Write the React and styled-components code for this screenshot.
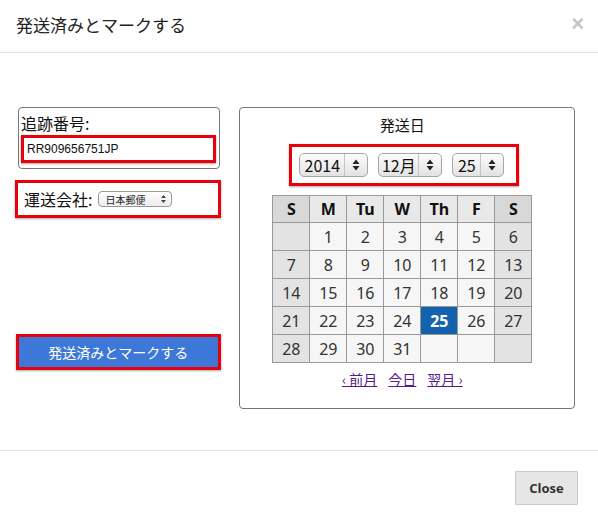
import React from 'react'
import styled, { createGlobalStyle } from 'styled-components'

const Global = createGlobalStyle`
  html, body { margin: 0; padding: 0; background: #fff; }
  body { font-family: "Noto Sans CJK JP", "Noto Sans", sans-serif; color: #222; }
`

const Modal = styled.div`
  width: 598px;
  height: 524px;
  display: flex;
  flex-direction: column;
  background: #fff;
`

const Header = styled.div`
  height: 53px;
  box-sizing: border-box;
  border-bottom: 1px solid #e5e5e5;
  display: flex;
  align-items: center;
  justify-content: space-between;
  padding: 0 14px 4px 16px;
`

const Title = styled.h4`
  margin: 0;
  font-size: 17px;
  font-weight: 400;
  color: #222;
`

const CloseX = styled.span`
  font-family: "Liberation Sans", Arial, sans-serif;
  font-size: 22px;
  font-weight: 700;
  color: #c4c4c4;
  line-height: 1;
`

const Body = styled.div`
  height: 397px;
  box-sizing: border-box;
  padding: 54px 23px 0 16px;
  display: flex;
  gap: 18px;
`

const LeftCol = styled.div`
  width: 205px;
  display: flex;
  flex-direction: column;
`

const TrackBox = styled.div`
  margin: 0 1px 0 2px;
  border: 1px solid #777;
  border-radius: 4px;
  padding: 3px 3px 5px 2px;
`

const Label = styled.span`
  font-size: 16px;
  line-height: 24px;
  color: #111;
`

const Highlight = styled.div`
  border: 3px solid #e8000b;
  box-shadow: 0 1px 2px rgba(0, 0, 0, 0.35);
`

const TrackInput = styled(Highlight)`
  height: 22px;
  display: flex;
  align-items: center;
  padding: 0 3px;
  font-family: "Liberation Sans", Arial, sans-serif;
  font-size: 12px;
  color: #111;
  background: #fff;
`

const CarrierRow = styled(Highlight)`
  margin-top: 11px;
  margin-left: -1px;
  height: 32px;
  display: flex;
  align-items: center;
  gap: 6px;
  padding: 0 6px;
`

const MiniSelect = styled.div`
  width: 74px;
  height: 16px;
  box-sizing: border-box;
  border: 1px solid #999;
  border-radius: 4px;
  background: linear-gradient(#fff, #ececec);
  display: flex;
  align-items: center;
  justify-content: space-between;
  padding: 0 5px 0 6px;
  font-size: 10px;
  color: #222;
`

const MarkButton = styled(Highlight)`
  margin-top: 116px;
  height: 30px;
  background: #3d78d8;
  color: #fff;
  font-size: 14px;
  display: flex;
  align-items: center;
  justify-content: center;
`

const CalPanel = styled.div`
  width: 337px;
  height: 302px;
  box-sizing: border-box;
  border: 1px solid #777;
  border-radius: 4px;
  display: flex;
  flex-direction: column;
  align-items: center;
  padding: 6px 9px 0 0;
`

const CalTitle = styled.div`
  font-size: 15px;
  line-height: 22px;
  color: #111;
`

const SelectGroup = styled(Highlight)`
  margin-top: 8px;
  margin-left: 4px;
  height: 36px;
  display: flex;
  align-items: center;
  gap: 10px;
  padding: 0 12px 0 7px;
`

const Select = styled.div`
  width: ${p => p.$w}px;
  height: 24px;
  box-sizing: border-box;
  border: 1px solid #a5a5a5;
  border-radius: 5px;
  background: linear-gradient(#fdfdfd, #e2e2e2);
  display: flex;
  align-items: center;
  box-shadow: inset 0 1px 0 #fff;
`

const SelectValue = styled.span`
  flex: 1;
  text-align: center;
  font-size: 16px;
  color: #111;
`

const SelectArrow = styled.span`
  width: 22px;
  height: 100%;
  border-left: 1px solid #c4c4c4;
  display: flex;
  align-items: center;
  justify-content: center;
`

const Table = styled.table`
  margin-top: 9px;
  border-collapse: collapse;
  border: 1px solid #999;
  font-family: "Noto Sans", "Noto Sans CJK JP", sans-serif;
`

const Th = styled.th`
  width: 36px;
  height: 26px;
  padding: 0;
  border: 1px solid #999;
  background: ${p => (p.$weekend ? '#d8d8d8' : '#e9e9e9')};
  font-size: 16px;
  font-weight: 700;
  color: #111;
`

const Td = styled.td`
  width: 36px;
  height: 27px;
  padding: 0;
  border: 1px solid #999;
  text-align: center;
  font-size: 16px;
  color: ${p => (p.$active ? '#fff' : '#333')};
  font-weight: ${p => (p.$active ? 700 : 400)};
  background: ${p => (p.$active ? '#1461ad' : p.$weekend ? '#e3e3e3' : '#f6f6f6')};
`

const Nav = styled.div`
  margin-top: 6px;
  display: flex;
  gap: 11px;
  font-size: 14px;
`

const NavLink = styled.a`
  color: #551a8b;
  text-decoration: underline;
`

const Footer = styled.div`
  flex: 1;
  border-top: 1px solid #e5e5e5;
  display: flex;
  justify-content: flex-end;
  align-items: flex-start;
  padding: 20px 20px 0 0;
`

const CloseButton = styled.button`
  width: 63px;
  height: 34px;
  background: #e6e6e6;
  border: 1px solid #c8c8c8;
  border-radius: 1px;
  font-family: "Open Sans", "Liberation Sans", sans-serif;
  font-size: 13px;
  font-weight: 700;
  color: #333;
`

const Arrows = () => (
  <svg width="8" height="12" viewBox="0 0 8 12">
    <path d="M4 0.5 L7.5 5 H0.5 Z M4 11.5 L7.5 7 H0.5 Z" fill="#222" />
  </svg>
)

const weeks = [
  [null, 1, 2, 3, 4, 5, 6],
  [7, 8, 9, 10, 11, 12, 13],
  [14, 15, 16, 17, 18, 19, 20],
  [21, 22, 23, 24, 25, 26, 27],
  [28, 29, 30, 31, null, null, null],
]

const days = ['S', 'M', 'Tu', 'W', 'Th', 'F', 'S']

export default function App() {
  return (
    <>
      <Global />
      <Modal>
        <Header>
          <Title>発送済みとマークする</Title>
          <CloseX>×</CloseX>
        </Header>
        <Body>
          <LeftCol>
            <TrackBox>
              <Label>追跡番号:</Label>
              <TrackInput>RR909656751JP</TrackInput>
            </TrackBox>
            <CarrierRow>
              <Label>運送会社:</Label>
              <MiniSelect>
                日本郵便
                <svg width="5" height="8" viewBox="0 0 5 8">
                  <path d="M2.5 0 L5 3 H0 Z M2.5 8 L5 5 H0 Z" fill="#444" />
                </svg>
              </MiniSelect>
            </CarrierRow>
            <MarkButton>発送済みとマークする</MarkButton>
          </LeftCol>
          <CalPanel>
            <CalTitle>発送日</CalTitle>
            <SelectGroup>
              <Select $w={69}>
                <SelectValue>2014</SelectValue>
                <SelectArrow><Arrows /></SelectArrow>
              </Select>
              <Select $w={64}>
                <SelectValue>12月</SelectValue>
                <SelectArrow><Arrows /></SelectArrow>
              </Select>
              <Select $w={52}>
                <SelectValue>25</SelectValue>
                <SelectArrow><Arrows /></SelectArrow>
              </Select>
            </SelectGroup>
            <Table>
              <thead>
                <tr>
                  {days.map((d, i) => (
                    <Th key={i} $weekend={i === 0 || i === 6}>{d}</Th>
                  ))}
                </tr>
              </thead>
              <tbody>
                {weeks.map((w, r) => (
                  <tr key={r}>
                    {w.map((n, i) => (
                      <Td key={i} $weekend={i === 0 || i === 6} $active={n === 25}>
                        {n}
                      </Td>
                    ))}
                  </tr>
                ))}
              </tbody>
            </Table>
            <Nav>
              <NavLink href="#">‹ 前月</NavLink>
              <NavLink href="#">今日</NavLink>
              <NavLink href="#">翌月 ›</NavLink>
            </Nav>
          </CalPanel>
        </Body>
        <Footer>
          <CloseButton>Close</CloseButton>
        </Footer>
      </Modal>
    </>
  )
}
